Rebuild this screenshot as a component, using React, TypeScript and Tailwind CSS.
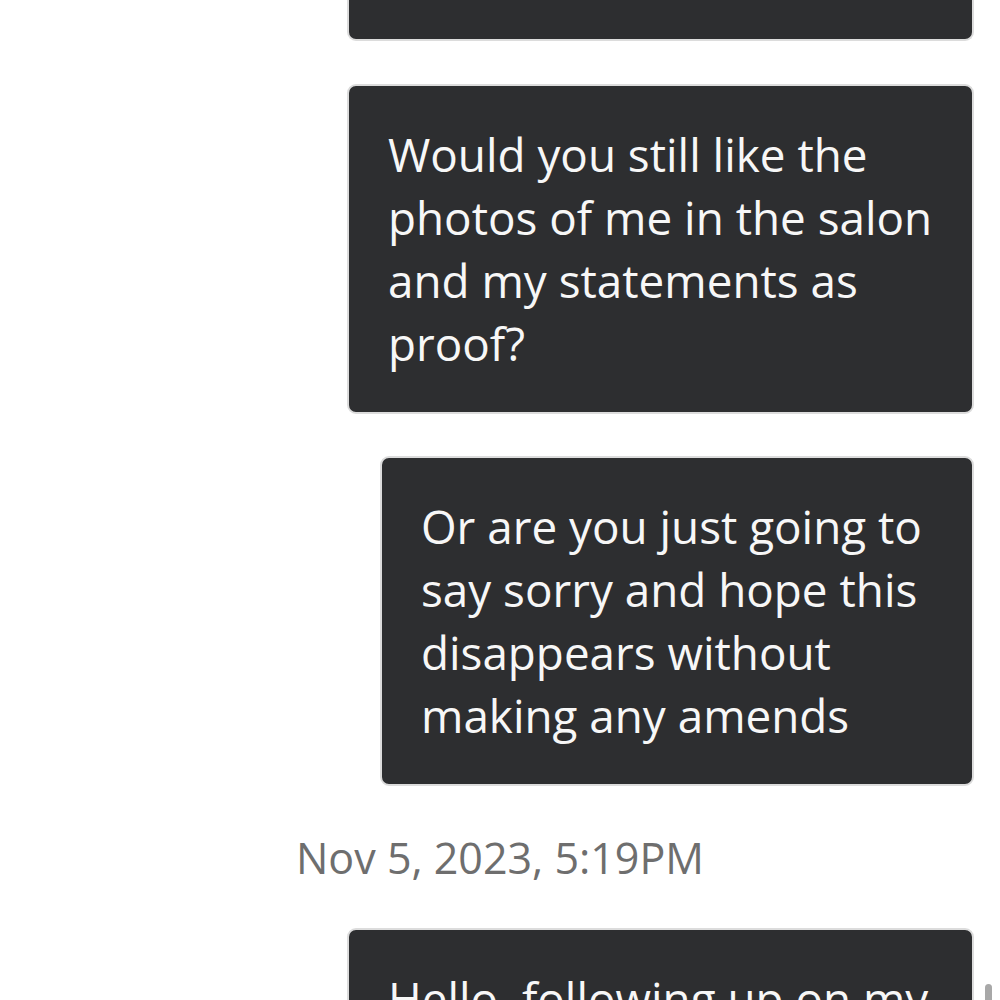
import React from "react";

function Bubble({ width, children, className = "" }: { width: string; children: React.ReactNode; className?: string }) {
  return (
    <div className={`mr-[26px] self-end ${width} rounded-[9px] border-2 border-[#dcdcdc] bg-[#2d2e30] pl-[39px] pr-[30px] pt-[37px] pb-[37px] text-[45.8px] leading-[63px] text-[#f7f7f7] ${className}`}>
      {children}
    </div>
  );
}

export default function App() {
  return (
    <div
      className="relative h-[1000px] w-[1000px] overflow-hidden bg-white"
      style={{ fontFamily: '"Open Sans", "Noto Sans", sans-serif' }}
    >
      <div className="flex flex-col">
        <div className="mr-[26px] h-[41px] w-[627px] self-end rounded-b-[9px] border-2 border-t-0 border-[#dcdcdc] bg-[#2d2e30]" />
        <Bubble width="w-[627px]" className="mt-[43px]">
          Would you still like the photos of me in the salon and my statements as proof?
        </Bubble>
        <Bubble width="w-[594px]" className="mt-[42px]">
          Or are you just going to say sorry and hope this disappears without making any amends
        </Bubble>
        <div className="mt-[43px] text-center text-[43px] leading-[58px] text-[#6e6e6e]">
          Nov 5, 2023, 5:19PM
        </div>
        <Bubble width="w-[627px]" className="mt-[41px]">
          Hello, following up on my message from last week regarding the service
        </Bubble>
      </div>
      <div className="absolute right-[8px] top-[984px] h-[40px] w-[7px] rounded-full bg-[#a8a8a8]" />
    </div>
  );
}
